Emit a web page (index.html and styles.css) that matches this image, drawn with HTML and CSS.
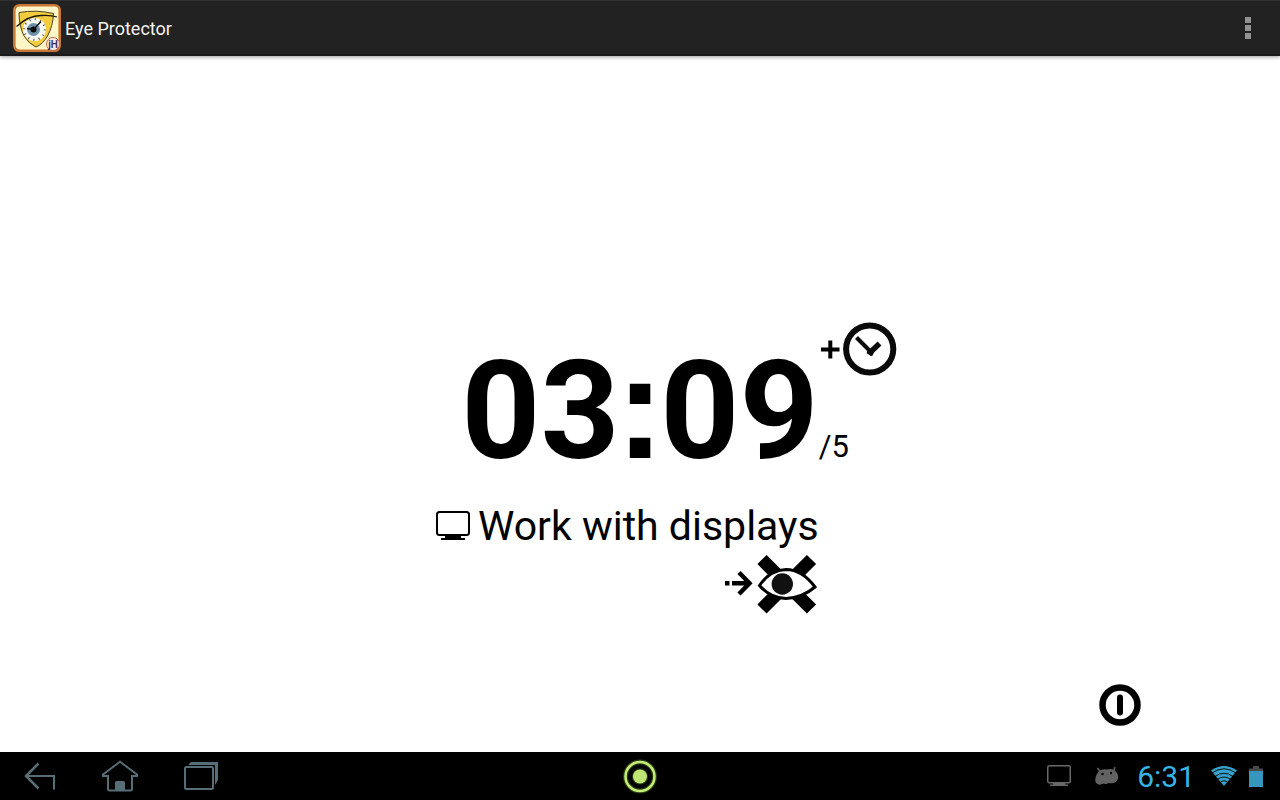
FILE: index.html
```html
<!DOCTYPE html>
<html lang="en">
<head>
<meta charset="utf-8">
<title>Eye Protector</title>
<link rel="stylesheet" href="styles.css">
</head>
<body>
<header class="action-bar">
  <svg class="app-icon" viewBox="0 0 48 48" aria-hidden="true">
    <rect x="1.300" y="1.300" width="45.400" height="45.400" rx="5" fill="#fff6c8" stroke="#c97834" stroke-width="2.600"/>
    <path d="M6 8.500Q23 5.500 40.500 9.500Q40 22 34.500 32Q30 40 23 43Q16 40 11 32Q6 22 6 8.500Z" fill="#f2cc3d" stroke="#4b4422" stroke-width="1"/>
    <circle cx="21.500" cy="25.500" r="11.500" fill="#f8f8f2"/>
    <circle cx="21.500" cy="25.500" r="10.300" fill="none" stroke="#444" stroke-width="2" stroke-dasharray="1 4.393"/>
    <circle cx="20.500" cy="25.500" r="6.500" fill="#6c91a8"/>
    <circle cx="20.500" cy="25.500" r="3" fill="#080808"/>
    <path d="M14 24.500L20.500 25.500L28 17.500" fill="none" stroke="#111" stroke-width="1.400"/>
    <path d="M3.500 22.500Q16 11 29 11.500Q38 11 44 13" fill="none" stroke="#1c1a12" stroke-width="1.300"/>
    <circle cx="40" cy="40" r="6.500" fill="#f8f0ee" stroke="#b9694a" stroke-width="1"/>
    <text class="badge-text" x="40" y="43.500" text-anchor="middle">jH</text>
  </svg>
  <h1 class="title">Eye Protector</h1>
  <button class="overflow" type="button" aria-label="More options">
    <svg width="6" height="22" viewBox="0 0 6 22" fill="#929292"><path d="M0 0h6v6H0zM0 8h6v6H0zM0 16h6v6H0z"/></svg>
  </button>
</header>

<main class="screen">
  <section class="session">
    <div class="time">03<span class="colon">:</span>09</div>
    <div class="side">
      <button class="icon-button" type="button" aria-label="Add time">
        <svg width="76" height="54" viewBox="0 0 76 54" fill="none" stroke="#0a0a0a">
          <path d="M0 27.500H18.500M9.300 18.500V36.500" stroke="#000" stroke-width="4"/>
          <circle cx="48.700" cy="27" r="23.600" stroke-width="6"/>
          <path d="M35.500 15.500L50 30" stroke-width="4"/>
          <path d="M47.500 32L58.500 21.500" stroke-width="5.500"/>
          <path d="M46.500 29.500L52 32.500" stroke-width="4"/>
        </svg>
      </button>
      <span class="total">/5</span>
    </div>
    <div class="task">
      <svg width="34" height="30" viewBox="0 0 34 30">
        <rect x="1" y="1" width="32" height="23" rx="2.500" fill="none" stroke="#000" stroke-width="2"/>
        <path d="M9 24h16v3h4v2H5v-2h4z"/>
      </svg>
      <span>Work with displays</span>
    </div>
    <button class="icon-button skip" type="button" aria-label="Skip to eye rest">
      <svg width="92" height="60" viewBox="0 0 92 60">
        <path d="M0 27h4.500v4.500H0z"/>
        <path d="M7 29.200H24M14 18.500L24.500 29.200L14 40" fill="none" stroke="#000" stroke-width="4.500"/>
        <path d="M37 5.500L86.500 55M86.500 5.500L37 55" stroke="#000" stroke-width="13"/>
        <path d="M34.500 31.500Q45 16 61 15.500Q77 15.500 90 33Q77 44 61 44.500Q45 44 34.500 31.500Z" fill="#fff" stroke="#000" stroke-width="3"/>
        <circle cx="57.300" cy="30" r="10.700" fill="#111"/>
      </svg>
    </button>
  </section>
  <div class="power-row">
    <button class="icon-button" type="button" aria-label="Stop">
      <svg width="42" height="42" viewBox="0 0 42 42" fill="none" stroke="#000">
        <circle cx="21" cy="21" r="17.500" stroke-width="6.500"/>
        <path d="M21 13.500V28.500" stroke-width="6" stroke-linecap="round"/>
      </svg>
    </button>
  </div>
</main>

<footer class="system-bar">
  <nav class="nav" aria-label="System navigation">
    <button class="icon-button" type="button" aria-label="Back">
      <svg width="32" height="28" viewBox="0 0 32 28" fill="none" stroke="#586e77"><path d="M14.500 1.500L2 14L14.500 26.500" stroke-width="2.500"/><path d="M2 14H30V27.500" stroke-width="2"/></svg>
    </button>
    <button class="icon-button" type="button" aria-label="Home">
      <svg width="38" height="32" viewBox="0 0 38 32" fill="none" stroke="#586e77" stroke-width="2"><path d="M7 16H2V14.500L19 1.800L36 14.500V16H31V29Q31 30.500 29.500 30.500H8.500Q7 30.500 7 29Z"/><path d="M14 30.500V22.500Q14 21 15.500 21H22.500Q24 21 24 22.500V30.500Z" fill="#586e77" stroke="none"/></svg>
    </button>
    <button class="icon-button" type="button" aria-label="Recent apps">
      <svg width="34" height="28" viewBox="0 0 34 28"><path d="M4 3L7 0H34V18L31 23V3Z" fill="#586e77"/><rect x="1" y="5" width="28" height="22" rx="1.500" fill="#000" stroke="#586e77" stroke-width="2"/></svg>
    </button>
  </nav>
  <button class="icon-button" type="button" aria-label="Quick menu">
    <svg width="36" height="36" viewBox="0 0 36 36" fill="none">
      <circle cx="18" cy="18.500" r="14.500" stroke="#2c3e16" stroke-width="5"/>
      <circle cx="18" cy="18.500" r="14.500" stroke="#c4ee77" stroke-width="2.500"/>
      <circle cx="18" cy="18.500" r="8" fill="#2c3e16"/><circle cx="18" cy="18.500" r="7" fill="#bfe673"/>
    </svg>
  </button>
  <div class="status">
    <svg width="24" height="22" viewBox="0 0 24 22"><rect x=".75" y=".75" width="22.500" height="17" rx="1.500" fill="none" stroke="#686868" stroke-width="1.500"/><path d="M6 18h12v1.500h3V21H3v-1.500h3z" fill="#686868"/></svg>
    <svg class="debug" width="24" height="18" viewBox="0 0 24 18"><path d="M2.500 1L5.500 5M20 0L18.500 4" stroke="#626262" stroke-width="1.500"/><path d="M4 4Q8 1.500 12 2.500Q17 1 20.500 4Q24 7.500 23 12Q20 17.500 14 16Q11 17.500 8.500 16.500Q4 19 1 16Q-.5 13 1 9Q2 6 4 4Z" fill="#626262"/><circle cx="7.500" cy="7" r="1.200"/><circle cx="16" cy="6" r="1.200"/></svg>
    <time class="clock">6:31</time>
    <svg width="26" height="20" viewBox="0 0 26 20"><path d="M0 4.500Q13-4.500 26 4.500L13 20Z" fill="#36a0ca"/><g fill="none" stroke="#000" stroke-width=".9"><path d="M1 7Q13-1.500 25 7"/><path d="M4 10.500Q13 4 22 10.500"/><path d="M6 13.500Q13 8.500 20 13.500"/><path d="M9 16.500Q13 13 17 16.500"/></g></svg>
    <svg width="14" height="21" viewBox="0 0 14 21"><path d="M4 0h6v2.500h4V5H0V2.500h4z" fill="#484848"/><path d="M0 5h14v16H0z" fill="#3796bd"/></svg>
  </div>
</footer>
</body>
</html>
```

FILE: styles.css
```css
* { box-sizing: border-box; }

body {
  margin: 0;
  min-height: 100vh;
  display: flex;
  flex-direction: column;
  background: #fff;
  color: #000;
  font-family: Roboto, sans-serif;
}

svg { display: block; }

button {
  border: 0;
  padding: 0;
  background: none;
  cursor: pointer;
}

.action-bar {
  display: flex;
  align-items: center;
  gap: 4px;
  height: 56px;
  padding: 0 12px 0 13px;
  background: #222;
  border-top: 1px solid #303030;
  border-bottom: 2px solid #1a1a1a;
  box-shadow: 0 1px 4px rgba(0, 0, 0, .4);
}

.app-icon {
  width: 48px;
  height: 48px;
}

.badge-text {
  font: bold 10px Roboto, sans-serif;
  fill: #43305a;
}

.title {
  margin: 0;
  padding-top: 2px;
  flex: 1;
  color: #f3f3f3;
  font-size: 18px;
  font-weight: 400;
}

.overflow {
  display: grid;
  place-items: center;
  width: 40px;
  height: 48px;
}

.screen {
  flex: 1;
  display: flex;
  flex-direction: column;
}

.screen::before {
  content: "";
  flex: 19;
}

.session {
  display: grid;
  grid-template-columns: 1fr auto 1fr;
}

.time {
  grid-column: 2;
  padding-top: 25px;
  font-size: 138px;
  font-weight: 700;
  line-height: 128px;
}

/* Square dots for the separator */
.colon {
  margin: 0 -4px;
  font-family: "Liberation Sans", sans-serif;
  font-size: 146px;
  line-height: 1px;
}

.side {
  display: flex;
  flex-direction: column;
  align-items: flex-start;
  justify-content: space-between;
  padding: 0 0 10px 2px;
}

.total {
  margin-left: -2px;
  font-size: 31px;
  line-height: 36px;
}

.task {
  grid-column: 1 / 3;
  justify-self: end;
  display: flex;
  align-items: center;
  gap: 8px;
  margin-top: 23px;
  font-size: 41px;
  line-height: 56px;
}

.skip {
  grid-column: 1 / 3;
  justify-self: end;
  margin-right: 2px;
}

.power-row {
  flex: 5;
  display: flex;
  justify-content: flex-end;
  align-items: flex-end;
  padding: 0 139px 26px 0;
}

.system-bar {
  display: grid;
  grid-template-columns: 1fr auto 1fr;
  align-items: center;
  height: 48px;
  padding: 0 17px;
  background: #000;
}

.nav {
  display: flex;
  align-items: center;
  gap: 45px;
  padding-left: 7px;
}

.status {
  display: flex;
  align-items: center;
  justify-content: flex-end;
  gap: 12px;
}

.debug { margin: 0 6px 0 12px; }

.clock {
  margin-right: 4px;
  padding-top: 2px;
  color: #35b5e5;
  font-size: 30px;
  line-height: 36px;
}
```
